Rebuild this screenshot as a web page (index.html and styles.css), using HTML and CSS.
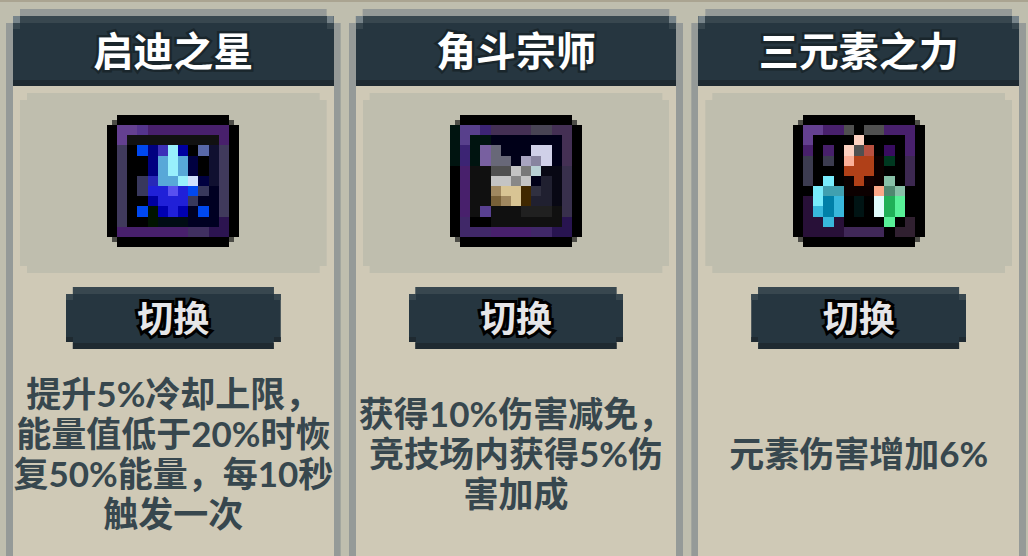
FILE: index.html
```html
<!DOCTYPE html>
<html lang="zh-CN">
<head>
<meta charset="utf-8">
<meta name="viewport" content="width=device-width, initial-scale=1">
<title>天赋切换</title>
<link rel="stylesheet" href="styles.css">
</head>
<body>
<main class="cards">
  <article class="card">
    <h2 class="card-title">启迪之星</h2>
    <div class="card-body">
      <div class="card-panel">
        <svg class="icon" viewBox="0 0 26 26" shape-rendering="crispEdges" aria-hidden="true">
          <path fill="#4d4d47" d="M1 1h24v24H1z"/>
          <path fill="#000" d="M2 0h22v26H2zM0 2h26v22H0z"/>
          <g transform="scale(2)">
            <path fill="#48206c" d="M1 1h11v2H1zM1 11h7v1H1z"/>
            <path fill="#644090" d="M1 1h2v1H2v1H1z"/><path fill="#54348c" d="M3 1h1v1H3z"/>
            <path fill="#403a5c" d="M1 3h1v8H1zM11 3h1v7h-1z"/>
            <path fill="#403060" d="M8 11h2v1H8z"/><path fill="#2c1450" d="M10 11h2v1h-2zM11 10h1v1h-1z"/>
            <path fill="#000" d="M2 2h9v9H2z"/><path fill="#111" d="M2 2h9v1H2z"/>
            <path fill="#101030" d="M10 3h1v4h-1z"/><path fill="#000022" d="M8 7h3v4H8z"/>
            <path fill="#000080" d="M4 3h1v3H4z"/><path fill="#3c30b8" d="M5 3h1v1H5z"/>
            <path fill="#0000a0" d="M7 3h1v1H7zM4 8h1v1H4z"/><path fill="#5868a8" d="M9 3h1v1H9z"/>
            <path fill="#000040" d="M8 4h1v2H8zM9 6h1v1H9z"/>
            <path fill="#58a8d8" d="M5 4h3v2H7v1H5z"/><path fill="#98f0fc" d="M6 3h1v3H6zM7 6h1v1H7z"/>
            <path fill="#d0e0fc" d="M8 6h1v1H8z"/>
            <path fill="#38385c" d="M3 6h1v2H3zM9 7h1v1H9zM8 8h1v1H8z"/><path fill="#2828b8" d="M4 6h1v1H4z"/>
            <path fill="#2020d8" d="M4 7h4v2H7v1H6V9H5V8H4z"/><path fill="#5850f0" d="M6 7h1v1H6z"/>
            <path fill="#0000b0" d="M5 9h1v1H5zM7 9h1v1H7z"/><path fill="#001400" d="M4 9h1v2H4z"/><path fill="#000c14" d="M5 10h3v1H5z"/>
            <path fill="#0048f0" d="M3 3h1v1H3zM8 7h1v1H8zM3 9h1v1H3zM9 9h1v1H9z"/>
          </g>
        </svg>
      </div>
      <button class="switch" type="button">切换</button>
      <div class="desc"><p class="desc-text">提升5%冷却上限，<br>能量值低于20%时恢<br>复50%能量，每10秒<br>触发一次</p></div>
    </div>
  </article>

  <article class="card">
    <h2 class="card-title">角斗宗师</h2>
    <div class="card-body">
      <div class="card-panel">
        <svg class="icon" viewBox="0 0 26 26" shape-rendering="crispEdges" aria-hidden="true">
          <path fill="#4d4d47" d="M1 1h24v24H1z"/>
          <path fill="#000" d="M2 0h22v26H2zM0 2h26v22H0z"/>
          <g transform="scale(2)">
            <path fill="#001410" d="M0 1h1v4H0z"/>
            <path fill="#48206c" d="M1 5h1v5H1zM4 11h4v1H4z"/>
            <path fill="#3c2474" d="M3 1h1v1H3zM1 3h1v2H1z"/><path fill="#402868" d="M1 10h1v1h2v1H1zM8 11h2v1H8z"/>
            <path fill="#443054" d="M4 1h8v4h-1V2H4z"/><path fill="#484454" d="M8 1h2v1H8z"/>
            <path fill="#38304c" d="M11 5h1v5h-1z"/><path fill="#281450" d="M11 10h1v2h-2v-1h1z"/>
            <path fill="#58408c" d="M1 1h2v1H2v1H1z"/>
            <path fill="#000" d="M2 2h9v9H2z"/><path fill="#001410" d="M2 2h2v1H3v2H2z"/>
            <path fill="#000018" d="M4 2h7v3H4zM8 6h1v1H8z"/><path fill="#080814" d="M9 5h2v4H9z"/>
            <path fill="#101010" d="M2 5h2v5H2zM4 9h7v2H4z"/>
            <path fill="#7860a0" d="M3 3h1v2H3z"/><path fill="#686878" d="M4 3h1v1h1v1H4z"/>
            <path fill="#d0d0e8" d="M8 3h2v2H9V4H8z"/><path fill="#a8a4c0" d="M7 4h1v1H7z"/><path fill="#8884a0" d="M8 4h1v1H8z"/>
            <path fill="#505050" d="M4 5h2v1H4z"/><path fill="#c4c4c4" d="M6 5h1v1H6zM4 6h2v1H4zM7 6h1v1H7z"/>
            <path fill="#787878" d="M7 5h1v1H7z"/><path fill="#888" d="M6 6h1v1H6z"/><path fill="#b8d0d4" d="M8 5h1v1H8z"/>
            <path fill="#202030" d="M9 6h1v3H8V8h1z"/><path fill="#303040" d="M8 7h1v1H8z"/>
            <path fill="#a08860" d="M4 7h1v1H4zM5 8h1v1H5z"/><path fill="#d8c494" d="M5 7h2v2H6V8H5z"/>
            <path fill="#402800" d="M7 7h1v2H7z"/><path fill="#786038" d="M4 8h1v1H4z"/>
            <path fill="#584090" d="M3 9h1v1H3z"/><path fill="#202020" d="M7 9h3v1H7z"/>
          </g>
        </svg>
      </div>
      <button class="switch" type="button">切换</button>
      <div class="desc"><p class="desc-text">获得10%伤害减免，<br>竞技场内获得5%伤<br>害加成</p></div>
    </div>
  </article>

  <article class="card">
    <h2 class="card-title">三元素之力</h2>
    <div class="card-body">
      <div class="card-panel">
        <svg class="icon" viewBox="0 0 26 26" shape-rendering="crispEdges" aria-hidden="true">
          <path fill="#4d4d47" d="M1 1h24v24H1z"/>
          <path fill="#000" d="M2 0h22v26H2zM0 2h26v22H0z"/>
          <g transform="scale(2)">
            <path fill="#644090" d="M1 1h2v1H2v1H1z"/>
            <path fill="#48206c" d="M3 1h2v1H3zM9 1h3v3h-1V2H9zM1 3h1v1H1zM3 3h1v1H3z"/>
            <path fill="#505050" d="M5 1h1v1H5zM7 1h2v1H7zM6 3h1v1H6z"/>
            <path fill="#3c3c50" d="M1 4h1v3H1zM3 4h1v1H3z"/><path fill="#3c2850" d="M11 4h1v3h-1z"/>
            <path fill="#281038" d="M1 8h1v2h3v2H1z"/><path fill="#402858" d="M5 11h4v1H5z"/>
            <path fill="#302030" d="M11 10h1v2h-2v-1h1z"/>
            <path fill="#0c0000" d="M8 4h1v3H8zM5 6h1v1h2v1H5z"/><path fill="#140000" d="M7 6h1v1H7z"/>
            <path fill="#fcd0c0" d="M6 2h1v1H6zM5 3h1v1H5z"/><path fill="#b85040" d="M7 3h1v1H7z"/>
            <path fill="#b04018" d="M6 4h2v2H7v1H6V6H5V5h1z"/><path fill="#fcb098" d="M5 4h1v1H5z"/>
            <path fill="#380c60" d="M9 3h1v1H9z"/><path fill="#003820" d="M9 4h1v1H9z"/>
            <path fill="#78ecfc" d="M3 6h1v1H3zM2 7h1v2H2z"/><path fill="#40a0b0" d="M3 7h2v1H3z"/>
            <path fill="#0080a8" d="M3 8h1v2H3z"/><path fill="#38b8dc" d="M4 8h1v2H4zM2 9h1v1H2zM3 10h1v1H3z"/>
            <path fill="#001414" d="M6 8h1v2H6z"/>
            <path fill="#88c0a8" d="M9 6h1v1H9zM10 7h1v1h-1z"/><path fill="#fca888" d="M8 7h1v1H8z"/><path fill="#508870" d="M9 7h1v1H9z"/>
            <path fill="#e0fcfc" d="M8 8h1v2H8z"/><path fill="#20b058" d="M9 8h1v2H9z"/><path fill="#58f098" d="M10 8h1v2h-1zM9 10h1v1H9z"/>
          </g>
        </svg>
      </div>
      <button class="switch" type="button">切换</button>
      <div class="desc"><p class="desc-text">元素伤害增加6%</p></div>
    </div>
  </article>
</main>
</body>
</html>
```
FILE: styles.css
```css
* { box-sizing: border-box; }

:root {
  --px: 7px;
  --slate: #263640;
  --slate-light: #38474f;
  --slate-dark: #1f2a31;
  --frame: #959a98;
  --sand: #cfc9b6;
  --stone: #bfbeae;
}

body {
  margin: 0;
  background: var(--stone);
  font-family: Lato, "Noto Sans CJK SC", sans-serif;
  font-weight: 700;
}

.cards {
  display: grid;
  grid-template-columns: repeat(3, minmax(0, 1fr));
  gap: 8px;
  min-height: 100vh;
  padding: 7px 2px 0 6px;
  border-top: 2px solid #aaa491;
}

.card {
  display: flex;
  flex-direction: column;
  padding: var(--px) var(--px) 0;
  background: var(--frame);
  clip-path: polygon(
    0 14px, 7px 14px, 7px 7px, 14px 7px, 14px 0,
    calc(100% - 14px) 0, calc(100% - 14px) 7px, calc(100% - 7px) 7px,
    calc(100% - 7px) 14px, 100% 14px, 100% 100%, 0 100%);
}

.card-title {
  margin: 0;
  padding: 5px 0;
  color: #fff;
  font-size: 40px;
  line-height: 60px;
  font-weight: 700;
  text-align: center;
  -webkit-text-stroke: 5px #1a262c;
  paint-order: stroke fill;
  background:
    linear-gradient(#77848a, #77848a) left top / 7px 7px no-repeat,
    linear-gradient(#77848a, #77848a) right top / 7px 7px no-repeat,
    linear-gradient(var(--slate-light), var(--slate-light)) left top / 100% 7px no-repeat,
    linear-gradient(var(--slate-light), var(--slate-light)) left 7px / 7px 6px no-repeat,
    linear-gradient(var(--slate-light), var(--slate-light)) right 7px / 7px 6px no-repeat,
    linear-gradient(var(--slate-dark), var(--slate-dark)) left bottom / 100% 6px no-repeat,
    var(--slate);
}

.card-body {
  flex: 1;
  display: flex;
  flex-direction: column;
  align-items: center;
  padding-top: 7px;
  background: var(--sand);
}

.card-panel,
.switch {
  clip-path: polygon(
    0 7px, 7px 7px, 7px 0,
    calc(100% - 7px) 0, calc(100% - 7px) 7px, 100% 7px,
    100% calc(100% - 7px), calc(100% - 7px) calc(100% - 7px), calc(100% - 7px) 100%,
    7px 100%, 7px calc(100% - 7px), 0 calc(100% - 7px));
}

.card-panel {
  align-self: stretch;
  display: flex;
  justify-content: center;
  margin: 0 7px 14px;
  padding: 22px 0 26px;
  background: var(--stone);
}

.icon {
  display: block;
  width: 132px;
  height: 132px;
}

.switch {
  width: 67%;
  padding: 0;
  border: 0;
  color: #e6e6e8;
  font: inherit;
  font-size: 36px;
  line-height: 62px;
  -webkit-text-stroke: 6px #000;
  paint-order: stroke fill;
  cursor: pointer;
  background:
    linear-gradient(var(--slate-light), var(--slate-light)) left top / 100% 7px no-repeat,
    linear-gradient(var(--slate-light), var(--slate-light)) left 7px / 7px 6px no-repeat,
    linear-gradient(var(--slate-light), var(--slate-light)) right 7px / 7px 6px no-repeat,
    linear-gradient(var(--slate-dark), var(--slate-dark)) left bottom / 100% 6px no-repeat,
    linear-gradient(var(--slate-dark), var(--slate-dark)) left bottom / 7px 12px no-repeat,
    linear-gradient(var(--slate-dark), var(--slate-dark)) right bottom / 7px 12px no-repeat,
    var(--slate);
}

.desc {
  flex: 1;
  display: flex;
  align-items: center;
}

.desc-text {
  margin: 0;
  color: #37474e;
  font-size: 35px;
  line-height: 40px;
  text-align: center;
  white-space: nowrap;
}
```
